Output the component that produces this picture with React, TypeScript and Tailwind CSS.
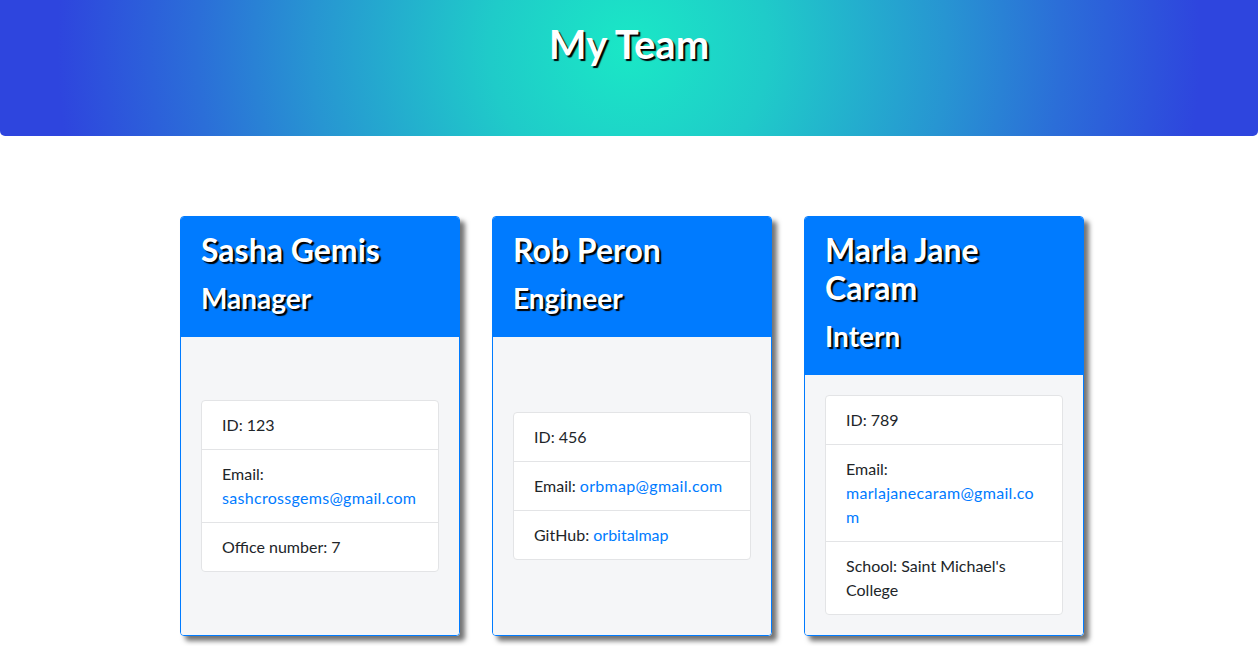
const team = [
  {
    name: 'Sasha Gemis',
    role: 'Manager',
    id: 123,
    email: 'sashcrossgems@gmail.com',
    extra: { label: 'Office number:', value: '7', link: false },
  },
  {
    name: 'Rob Peron',
    role: 'Engineer',
    id: 456,
    email: 'orbmap@gmail.com',
    extra: { label: 'GitHub:', value: 'orbitalmap', link: true },
  },
  {
    name: 'Marla Jane Caram',
    role: 'Intern',
    id: 789,
    email: 'marlajanecaram@gmail.com',
    extra: { label: 'School:', value: "Saint Michael's College", link: false },
  },
];

export default function App() {
  return (
    <div className="min-h-screen bg-white text-[#212529] font-['Lato','Noto_Sans',sans-serif]">
      {/* Jumbotron */}
      <div className="h-[136px] pt-5 rounded-b-[5px] bg-[radial-gradient(circle_at_50%_35%,#1ae8c6_0%,#1fcbc9_22%,#2795d2_50%,#2b6ed8_68%,#2e45de_90%)] text-center">
        <h1 className="text-[40px] leading-[48px] font-bold text-white [text-shadow:2px_2px_1px_#000]">
          My Team
        </h1>
      </div>

      {/* Cards */}
      <div className="flex justify-center gap-8 mt-[80px] pl-[6px]">
        {team.map((m) => (
          <div
            key={m.id}
            className="w-[280px] h-[420px] flex flex-col rounded-[4px] border border-[#007bff] shadow-[5px_5px_5px_rgba(0,0,0,0.55)] overflow-hidden"
          >
            <div className="bg-[#007bff] px-5 pt-[14px] pb-[22px] text-white [text-shadow:2px_2px_1px_#000]">
              <h2 className="text-[32px] leading-[38px] font-bold mb-3">{m.name}</h2>
              <h3 className="text-[28px] leading-[34px] font-bold">{m.role}</h3>
            </div>
            <div className="flex-1 bg-[#f5f6f8] p-5 flex items-center">
              <ul className="w-full bg-white border border-[#e3e4e6] rounded-[4px] text-base leading-6">
                <li className="px-5 py-3 border-b border-[#e3e4e6]">ID: {m.id}</li>
                <li className="px-5 py-3 border-b border-[#e3e4e6] break-words">
                  Email: <a className="text-[#007bff] tracking-[0.3px]">{m.email}</a>
                </li>
                <li className="px-5 py-3">
                  {m.extra.label}{' '}
                  {m.extra.link ? <a className="text-[#007bff]">{m.extra.value}</a> : m.extra.value}
                </li>
              </ul>
            </div>
          </div>
        ))}
      </div>
    </div>
  );
}
